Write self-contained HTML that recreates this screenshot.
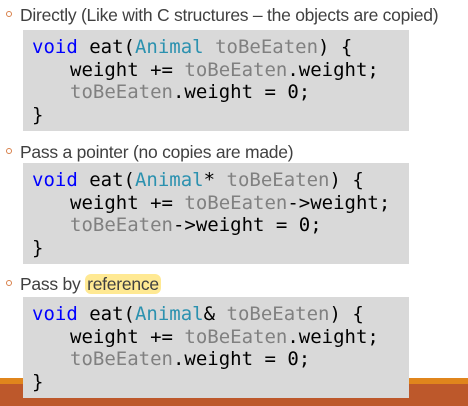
<!DOCTYPE html>
<html><head><meta charset="utf-8"><style>
html,body{margin:0;padding:0;width:468px;height:406px;overflow:hidden;background:#fff;position:relative}
.band1{position:absolute;left:0;top:378px;width:468px;height:6px;background:#e0851c}
.band2{position:absolute;left:0;top:384px;width:468px;height:22px;background:#bd582b}
.b{position:absolute;left:6px;font-family:"Liberation Sans",sans-serif;font-size:17.5px;color:#404040;white-space:nowrap;letter-spacing:-0.25px}
.b .dot{display:inline-block;width:4px;height:4px;border:1px solid #d8804a;border-radius:50%;margin-right:8px;vertical-align:4px}
.hl{background:#ffe993;border-radius:6px;padding:0 2px}
.code{position:absolute;left:23px;width:386px;height:101px;background:#d9d9d9;font-family:"DejaVu Sans Mono",monospace;font-size:19px;line-height:22.5px;color:#000;white-space:pre;padding:6px 0 0 9px;box-sizing:border-box}
.i{display:inline-block;width:38px}
.k{color:#0000ff}.t{color:#2b91af}.g{color:#808080}
</style></head><body>
<div class="band1"></div><div class="band2"></div>
<div class="b" style="top:5px"><span class="dot"></span>Directly (Like with C structures – the objects are copied)</div>
<div class="code" style="top:30px"><span class="k">void</span> eat(<span class="t">Animal</span> <span class="g">toBeEaten</span>) {
<span class="i"></span>weight += <span class="g">toBeEaten</span>.weight;
<span class="i"></span><span class="g">toBeEaten</span>.weight = 0;
}</div>
<div class="b" style="top:142px"><span class="dot"></span>Pass a pointer (no copies are made)</div>
<div class="code" style="top:163px"><span class="k">void</span> eat(<span class="t">Animal</span>* <span class="g">toBeEaten</span>) {
<span class="i"></span>weight += <span class="g">toBeEaten</span>-&gt;weight;
<span class="i"></span><span class="g">toBeEaten</span>-&gt;weight = 0;
}</div>
<div class="b" style="top:274px"><span class="dot"></span>Pass by <span class="hl">reference</span></div>
<div class="code" style="top:297px"><span class="k">void</span> eat(<span class="t">Animal</span>&amp; <span class="g">toBeEaten</span>) {
<span class="i"></span>weight += <span class="g">toBeEaten</span>.weight;
<span class="i"></span><span class="g">toBeEaten</span>.weight = 0;
}</div>
</body></html>
